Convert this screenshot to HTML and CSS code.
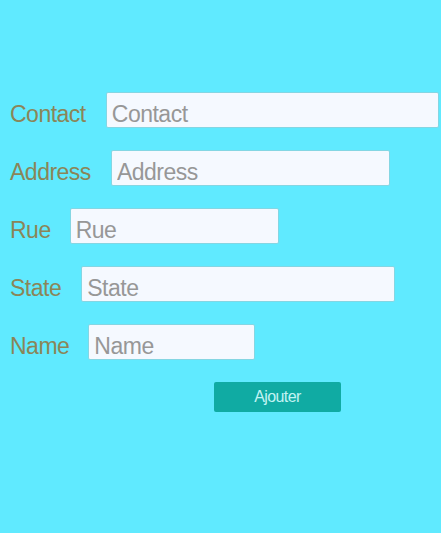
FILE: index.html
```html
<!DOCTYPE html>
<html>
<head>
<meta charset="utf-8">
<link rel="stylesheet" href="styles.css">
</head>
<body>
<form class="form">
  <div class="row">
    <label class="label">Contact</label>
    <input class="field field-contact" placeholder="Contact">
  </div>
  <div class="row">
    <label class="label">Address</label>
    <input class="field field-address" placeholder="Address">
  </div>
  <div class="row">
    <label class="label label-tight">Rue</label>
    <input class="field field-rue" placeholder="Rue">
  </div>
  <div class="row">
    <label class="label">State</label>
    <input class="field field-state" placeholder="State">
  </div>
  <div class="row">
    <label class="label label-tight">Name</label>
    <input class="field field-name" placeholder="Name">
  </div>
  <div class="actions">
    <button type="button" class="btn">Ajouter</button>
  </div>
</form>
</body>
</html>
```

FILE: styles.css
```css
html, body {
  margin: 0;
  padding: 0;
  background: #60eaff;
  height: 100%;
}
body {
  font-family: "Liberation Sans", Arial, sans-serif;
}
.form {
  padding: 92px 0 0 10px;
  display: flex;
  flex-direction: column;
  gap: 22px;
}
.row {
  display: flex;
  align-items: baseline;
  height: 36px;
}
.label {
  font-size: 23px;
  letter-spacing: -0.5px;
  color: #8b8558;
  margin-right: 20px;
}
.label-tight {
  margin-right: 19px;
}
.field {
  box-sizing: border-box;
  height: 36px;
  border: 1px solid #84d6e3;
  border-radius: 2px;
  background: #f5f9ff;
  font-family: "Liberation Sans", Arial, sans-serif;
  font-size: 23px;
  letter-spacing: -0.5px;
  line-height: 25px;
  padding: 9px 4px 0 5px;
  color: #555;
  outline: none;
}
.field::placeholder {
  color: #979797;
}
.field-contact { width: 333px; }
.field-address { width: 279px; }
.field-rue { width: 209px; }
.field-state { width: 314px; }
.field-name { width: 167px; }
.actions {
  padding-left: 204px;
}
.btn {
  width: 127px;
  height: 30px;
  border: none;
  border-radius: 2px;
  background: #10aba3;
  color: #c2f3f3;
  font-family: "Liberation Sans", Arial, sans-serif;
  font-size: 16px;
  letter-spacing: -0.6px;
  padding: 0;
}
```
